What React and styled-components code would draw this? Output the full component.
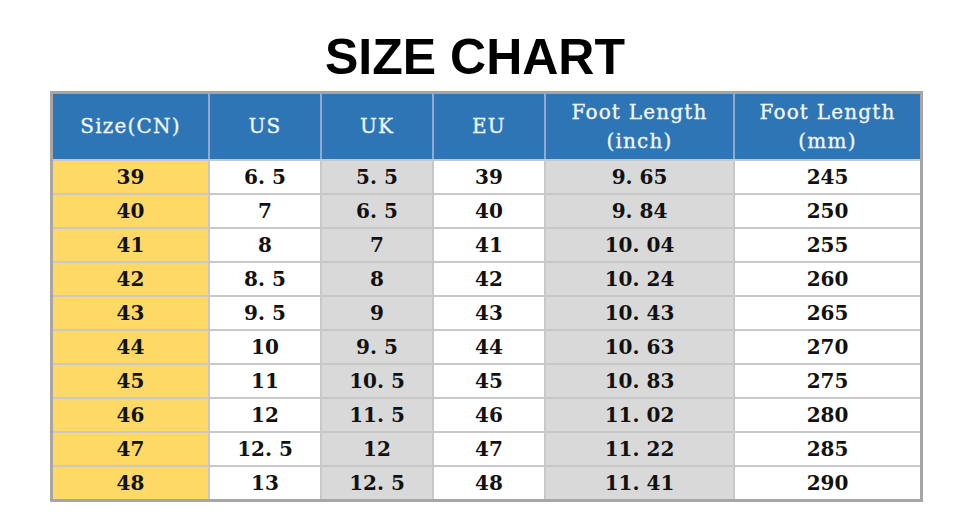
import React from "react";
import styled, { createGlobalStyle } from "styled-components";

const GlobalStyle = createGlobalStyle`
    body {
        margin: 0;
        background: #ffffff;
    }
`;

const headers = ["Size(CN)", "US", "UK", "EU", "Foot Length\n(inch)", "Foot Length\n(mm)"];

const rows = [
    ["39", "6. 5", "5. 5", "39", "9. 65", "245"],
    ["40", "7", "6. 5", "40", "9. 84", "250"],
    ["41", "8", "7", "41", "10. 04", "255"],
    ["42", "8. 5", "8", "42", "10. 24", "260"],
    ["43", "9. 5", "9", "43", "10. 43", "265"],
    ["44", "10", "9. 5", "44", "10. 63", "270"],
    ["45", "11", "10. 5", "45", "10. 83", "275"],
    ["46", "12", "11. 5", "46", "11. 02", "280"],
    ["47", "12. 5", "12", "47", "11. 22", "285"],
    ["48", "13", "12. 5", "48", "11. 41", "290"],
];

const widths = [157, 112, 112, 112, 189, 185];
const fills = ["#ffd966", "#ffffff", "#d9d9d9", "#ffffff", "#d9d9d9", "#ffffff"];

const SizeChart = () => {
    return (
        <Page>
            <GlobalStyle />
            <Title>SIZE CHART</Title>
            <Table>
                <colgroup>
                    {widths.map((w, i) => <col key={i} style={{ width: w }} />)}
                </colgroup>
                <thead>
                    <tr>
                        {headers.map((h, i) => (
                            <HeadCell key={i} $last={i === headers.length - 1}>{h}</HeadCell>
                        ))}
                    </tr>
                </thead>
                <tbody>
                    {rows.map((row, r) => (
                        <tr key={r}>
                            {row.map((v, i) => (
                                <Cell
                                    key={i}
                                    $fill={fills[i]}
                                    $last={i === row.length - 1}>
                                    {v}
                                </Cell>
                            ))}
                        </tr>
                    ))}
                </tbody>
            </Table>
        </Page>
    );
};

const Page = styled.div`
    width: 957px;
    height: 518px;
    padding-top: 32px;
    box-sizing: border-box;
    overflow: hidden;
`;

const Title = styled.h1`
    margin: 0 0 9px;
    padding-right: 7px;
    text-align: center;
    font-family: "Liberation Sans", Arial, sans-serif;
    font-weight: 700;
    font-size: 50px;
    line-height: 50px;
    color: #000000;
`;

const Table = styled.table`
    margin-left: 50px;
    border: 3px solid #a6a6a6;
    border-spacing: 0;
    table-layout: fixed;
    width: 873px;
`;

const HeadCell = styled.th`
    height: 65px;
    padding: 0;
    background: #2e75b6;
    color: #f4f8fc;
    font-family: "DejaVu Serif", "Liberation Serif", serif;
    font-weight: 400;
    font-size: 20px;
    line-height: 29px;
    letter-spacing: 1.2px;
    white-space: pre-line;
    text-align: center;
    vertical-align: middle;
    border-right: ${p => p.$last ? "none" : "2px solid #8fa9c6"};
    box-sizing: border-box;
    -webkit-text-stroke: 0.3px #f4f8fc;
`;

const Cell = styled.td`
    height: 34px;
    padding: 0;
    background: ${p => p.$fill};
    color: #111111;
    font-family: "DejaVu Serif", "Liberation Serif", serif;
    font-weight: 700;
    font-size: 20px;
    line-height: 32px;
    text-align: center;
    vertical-align: middle;
    border-top: 2px solid #c8c8c8;
    border-right: ${p => p.$last ? "none" : "2px solid #c8c8c8"};
    box-sizing: border-box;
    white-space: pre;
`;

export default SizeChart;
